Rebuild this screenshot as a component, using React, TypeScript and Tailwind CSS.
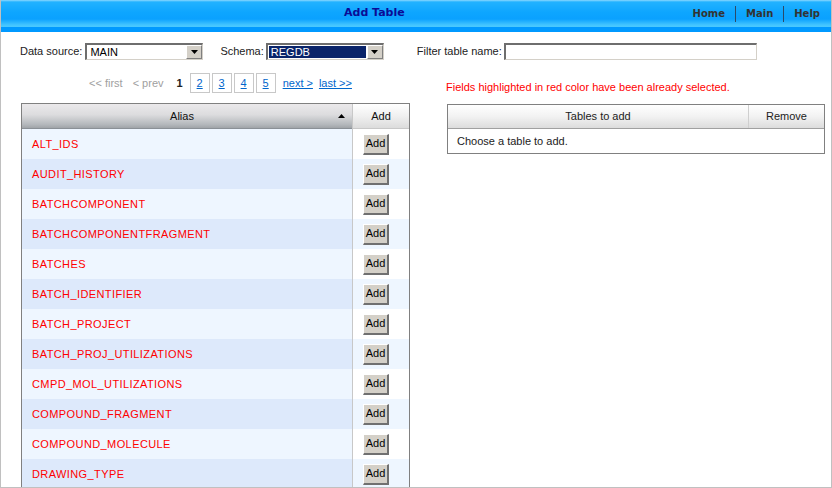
import React from "react";

const rows = [
  "ALT_IDS",
  "AUDIT_HISTORY",
  "BATCHCOMPONENT",
  "BATCHCOMPONENTFRAGMENT",
  "BATCHES",
  "BATCH_IDENTIFIER",
  "BATCH_PROJECT",
  "BATCH_PROJ_UTILIZATIONS",
  "CMPD_MOL_UTILIZATIONS",
  "COMPOUND_FRAGMENT",
  "COMPOUND_MOLECULE",
  "DRAWING_TYPE",
];

function Select({ value, width, selected }: { value: string; width: string; selected?: boolean }) {
  return (
    <div
      className={`${width} h-[17px] flex items-stretch border-t-2 border-l-2 border-b border-r border-t-[#6e6e6e] border-l-[#6e6e6e] border-b-[#d4d0c8] border-r-[#d4d0c8] bg-white`}
    >
      <div className="flex-1 flex items-center p-[1px]">
        <div
          className={`h-full w-full flex items-center pl-[2px] text-[11px] leading-none ${
            selected ? "bg-[#0a246a] text-white" : "text-black"
          }`}
        >
          {value}
        </div>
      </div>
      <div className="w-[16px] flex items-center justify-center bg-[#d4d0c8] border-t border-l border-t-white border-l-white border-b border-r border-b-[#808080] border-r-[#808080]">
        <svg width="7" height="4" viewBox="0 0 7 4">
          <polygon points="0,0 7,0 3.5,4" fill="#000" />
        </svg>
      </div>
    </div>
  );
}

function AddButton() {
  return (
    <button className="w-[26px] h-[21px] flex items-center justify-center bg-[#d4d0c8] border-t border-l border-t-white border-l-white border-b-2 border-r-2 border-b-[#707070] border-r-[#707070] text-[11px] text-black leading-none">
      Add
    </button>
  );
}

export default function App() {
  const font = { fontFamily: '"Liberation Sans", Arial, sans-serif' };
  return (
    <div
      className="w-[832px] h-[488px] overflow-hidden bg-white border-l border-r border-b border-[#c0c0c0] relative"
      style={font}
    >
      {/* header */}
      <div className="h-[27px] flex items-center bg-[linear-gradient(to_bottom,#8cd8ff_0px,#22b2ff_2px,#0ea6ff_12px,#0aa1ff_19px,#43c5ff_25px,#4ac8ff_27px)]">
        <div className="w-[343px]" />
        <div
          className="text-[11px] font-bold text-[#0b0b96]"
          style={{ fontFamily: '"DejaVu Sans", Verdana, sans-serif' }}
        >
          Add Table
        </div>
        <div className="flex-1" />
        <div
          className="flex items-center text-[10px] font-bold text-[#333333] mr-[10px]"
          style={{ fontFamily: '"DejaVu Sans", Verdana, sans-serif' }}
        >
          <span className="px-[10px]">Home</span>
          <span className="w-px h-[16px] bg-[#2a4a6a]" />
          <span className="px-[10px]">Main</span>
          <span className="w-px h-[16px] bg-[#2a4a6a]" />
          <span className="pl-[10px] pr-[1px]">Help</span>
        </div>
      </div>
      <div className="h-[5px] bg-[#0099ff]" />

      {/* form row */}
      <div className="mt-[11px] ml-[19px] flex items-center text-[11px] text-[#222]">
        <span className="mr-[3px]">Data source:</span>
        <Select value="MAIN" width="w-[118px]" />
        <span className="ml-[17px] mr-[2px]">Schema:</span>
        <Select value="REGDB" width="w-[118px]" selected />
        <span className="ml-[33px] mr-[2px]">Filter table name:</span>
        <div className="w-[253px] h-[17px] border-t-2 border-l-2 border-b border-r border-t-[#6e6e6e] border-l-[#6e6e6e] border-b-[#d4d0c8] border-r-[#d4d0c8] bg-white" />
      </div>

      <div className="flex mt-[13px]">
        {/* left column */}
        <div className="ml-[20px] w-[389px]">
          <div className="h-[20px] flex items-center pl-[68px] text-[11px]">
            <span className="text-[#a0a0a0]">&lt;&lt; first</span>
            <span className="text-[#a0a0a0] ml-[10px]">&lt; prev</span>
            <span className="font-bold text-[#222] ml-[13px] mr-[7px]">1</span>
            {["2", "3", "4", "5"].map((p) => (
              <span
                key={p}
                className="w-[20px] h-[20px] mr-[2px] border border-[#c8c8c8] flex items-center justify-center text-[#0066cc] underline"
              >
                {p}
              </span>
            ))}
            <span className="ml-[5px] text-[#0066cc] underline">next &gt;</span>
            <span className="ml-[6px] text-[#0066cc] underline">last &gt;&gt;</span>
          </div>

          <div className="mt-[10px] border-l border-r border-t border-[#808080]">
            <div className="flex h-[25px]">
              <div className="w-[330px] flex items-center bg-[linear-gradient(to_bottom,#ebe9eb_0%,#dcdcde_45%,#b4b8bc_85%,#a0a4a8_100%)] border-b border-[#8a9096]">
                <span className="flex-1 text-center text-[11px] text-[#111] pl-[4px]">Alias</span>
                <svg width="7" height="4" viewBox="0 0 7 4" className="mr-[7px]">
                  <polygon points="3.5,0 7,4 0,4" fill="#000" />
                </svg>
              </div>
              <div className="w-px bg-[#c8c8c8]" />
              <div className="flex-1 flex items-center justify-center text-[11px] text-[#111] bg-[linear-gradient(to_bottom,#ffffff_0%,#f0f0f0_50%,#dcdcdc_100%)] border-b border-[#c8c8c8]">
                Add
              </div>
            </div>
            {rows.map((r, i) => {
              const odd = i % 2 === 1;
              return (
                <div key={r} className="flex h-[30px]">
                  <div
                    className={`w-[330px] flex items-center pl-[10px] text-[11px] tracking-[0.4px] text-[#ff0000] ${
                      odd ? "bg-[#dde9fb]" : "bg-[#eef6ff]"
                    }`}
                  >
                    {r}
                  </div>
                  <div className="w-px bg-[#c8c8c8]" />
                  <div
                    className={`flex-1 flex items-center pl-[10px] ${odd ? "bg-[#eef6ff]" : "bg-white"}`}
                  >
                    <AddButton />
                  </div>
                </div>
              );
            })}
          </div>
        </div>

        {/* right column */}
        <div className="ml-[37px] w-[378px]">
          <div className="h-[20px] flex items-end text-[11px] text-[#ff0000] leading-none">
            <span className="-ml-px">Fields highlighted in red color have been already selected.</span>
          </div>
          <div className="mt-[11px] border border-[#808080]">
            <div className="flex h-[24px] bg-[linear-gradient(to_bottom,#ffffff_0%,#f2f2f2_50%,#dcdcdc_100%)] border-b border-[#a0a0a0]">
              <div className="w-[300px] flex items-center justify-center text-[11px] text-[#222]">
                Tables to add
              </div>
              <div className="w-px bg-[#cfcfcf]" />
              <div className="flex-1 flex items-center justify-center text-[11px] text-[#222]">
                Remove
              </div>
            </div>
            <div className="h-[24px] flex items-center pl-[9px] text-[11px] text-[#222] bg-white">
              Choose a table to add.
            </div>
          </div>
        </div>
      </div>
    </div>
  );
}
